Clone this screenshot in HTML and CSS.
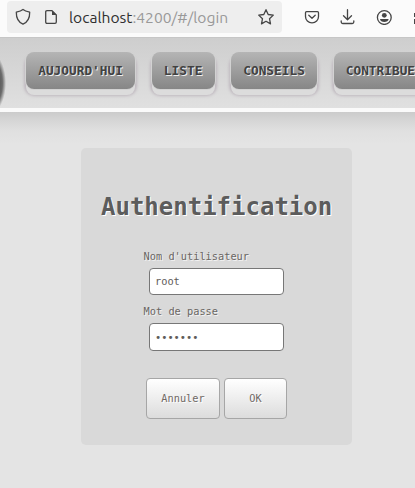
FILE: index.html
```html
<!DOCTYPE html>
<html lang="fr">
<head>
<meta charset="utf-8">
<title>Authentification</title>
<link rel="stylesheet" href="styles.css">
</head>
<body>
<div class="toolbar">
  <div class="address">
    <svg class="shield" width="16" height="18" viewBox="0 0 16 18"><path d="M8 1.5C6.2 3 4 3.6 1.3 4.200C1.200 9.5 3.2 14 8 16.2C12.800 14 14.800 9.500 14.700 4.200C12 3.600 9.800 3 8 1.500Z"/></svg>
    <svg class="page" width="14" height="16" viewBox="0 0 14 16"><path d="M3 1.700H8L12.300 6V13Q12.300 14.300 11 14.300H3Q1.700 14.300 1.700 13V3Q1.700 1.700 3 1.700Z"/><path class="solid" d="M8 1.500V6H12.500Z"/></svg>
    <div class="url"><span class="host">localhost</span><span class="path">:4200/#/login</span></div>
    <svg class="star" width="18" height="18" viewBox="0 0 18 18"><path d="M9 1.700L11.200 6.500L16.300 7.100L12.500 10.700L13.500 15.900L9 13.300L4.500 15.900L5.500 10.700L1.700 7.100L6.800 6.500Z"/></svg>
  </div>
  <div class="tools">
    <svg width="16" height="16" viewBox="0 0 16 16"><path d="M2.500 2.700H13.500Q14.500 2.700 14.500 3.700V7.500C14.500 11.200 11.700 13.800 8 13.800S1.500 11.200 1.500 7.500V3.700Q1.500 2.700 2.500 2.700ZM4.800 6.300L8 9.300L11.200 6.300"/></svg>
    <svg width="16" height="16" viewBox="0 0 16 16"><path d="M7.500 .7V10.500M3.500 6.800L7.500 10.700L11.500 6.800M1.200 11.800V13Q1.200 14.500 2.700 14.500H12.300Q13.800 14.500 13.800 13V11.800"/></svg>
    <svg width="16" height="16" viewBox="0 0 16 16"><circle cx="8.300" cy="8.500" r="6.900"/><circle class="solid" cx="8.300" cy="6.300" r="2.400"/><path class="solid" d="M4 10H12.600C12.600 12 10.500 13 8.300 13S4 12 4 10Z"/></svg>
    <svg width="16" height="16" viewBox="0 0 16 16"><path class="solid" d="M2 4H7V8H2ZM2 10H7V15H2Z"/></svg>
  </div>
</div>
<header>
  <div class="logo"></div>
  <nav>
    <a>AUJOURD'HUI</a><a>LISTE</a><a>CONSEILS</a><a>CONTRIBUER</a>
  </nav>
</header>
<main>
  <form class="login">
    <h1>Authentification</h1>
    <div class="fields">
      <label for="user">Nom d'utilisateur</label>
      <input id="user" type="text" value="root">
      <label for="password">Mot de passe</label>
      <input id="password" type="password" value="1234567">
    </div>
    <div class="actions">
      <button class="cancel" type="button">Annuler</button>
      <button class="ok" type="button">OK</button>
    </div>
  </form>
</main>
</body>
</html>
```
FILE: styles.css
```css
* { box-sizing: border-box; }
html { overflow: hidden; }
body {
  margin: 0;
  height: 488px;
  overflow: hidden;
  background: #e4e4e4;
  color: #6a6663;
  font-family: "DejaVu Sans Mono", monospace;
  font-size: 10.3px;
  text-shadow: 1px 1px 0 #f3f3f3;
}
svg { flex: none; fill: none; stroke: #454545; stroke-width: 1.3; stroke-linejoin: round; stroke-linecap: round; }
svg .solid { fill: #454545; stroke: none; }
.toolbar {
  display: flex;
  height: 37px;
  padding-left: 7px;
  overflow: hidden;
  background: #fbfbfb;
  text-shadow: none;
}
.address {
  display: flex;
  align-items: center;
  flex: none;
  width: 275px;
  height: 32px;
  margin-top: 1px;
  padding-left: 8px;
  background: #eee;
  border-radius: 4px;
}
.page { margin-left: 13px; }
.url {
  width: 181px;
  margin-left: 11px;
  padding-bottom: 1px;
  font: 15.600px/22px Ubuntu, "Open Sans", sans-serif;
  white-space: nowrap;
}
.host { color: #303030; }
.path { color: #999; }
.star { margin-left: 7px; }
.tools { display: flex; gap: 20px; padding: 9px 0 0 22px; }
header {
  display: flex;
  height: 75px;
  overflow: hidden;
  border-top: 1px solid #c6c6c6;
  border-bottom: 4px solid #fafafa;
  background: linear-gradient(#cecece, #e0e0e0);
}
.logo {
  flex: none;
  width: 26px;
  height: 70px;
  background: radial-gradient(ellipse 18px 32px at -12px 45px, #555 55%, #6c6c6c 80%, rgba(130,130,130,0) 100%);
}
nav { display: flex; gap: 16.500px; padding-top: 14px; }
nav a {
  flex: none;
  height: 37px;
  padding: 0 12.200px;
  border-radius: 8px;
  background: linear-gradient(#b5b5b5, #868686);
  box-shadow: 0 0 0 1px #d2d2d2, 0 6px 0 #dcdcdc, 0 5px 3px 2px #bfb8bf;
  color: #414141;
  font-size: 12.800px;
  font-weight: bold;
  line-height: 37px;
  text-shadow: 1px 1px 0 #eee;
}
main {
  height: 376px;
  padding: 36px 0 0 81px;
  background: linear-gradient(#cbcbcb, #d6d6d6 9px, #e0e0e0 19px, #e4e4e4 32px);
}
.login {
  width: 271px;
  height: 297px;
  padding-top: 45px;
  background: #d9d9d9;
  border-radius: 5px;
}
h1 {
  margin: 0 0 0 20px;
  font-size: 24px;
  line-height: 28px;
  color: #5c5c5c;
  text-shadow: 1px 1px 0 #fff;
}
.fields { display: flex; flex-direction: column; padding: 29px 0 0 62.600px; }
label { height: 18px; line-height: 13px; }
input {
  width: 135px;
  height: 27px;
  margin: 0 0 10px 5.400px;
  padding: 0 5px 1px;
  border: 1px solid #777;
  border-radius: 4px;
  background: #fff;
  color: #605c59;
  font: inherit;
}
#password { height: 28px; padding-bottom: 0; }
.actions { display: flex; gap: 4px; padding: 17px 0 0 65px; }
button {
  height: 41px;
  padding: 0 0 1px;
  border: 1px solid #a6a6a6;
  border-radius: 4px;
  background: linear-gradient(#fff, #dcdcdc);
  color: #706865;
  font: inherit;
  text-shadow: 1px 1px 0 #fff;
}
.cancel { width: 74px; }
.ok { width: 63px; }
```
